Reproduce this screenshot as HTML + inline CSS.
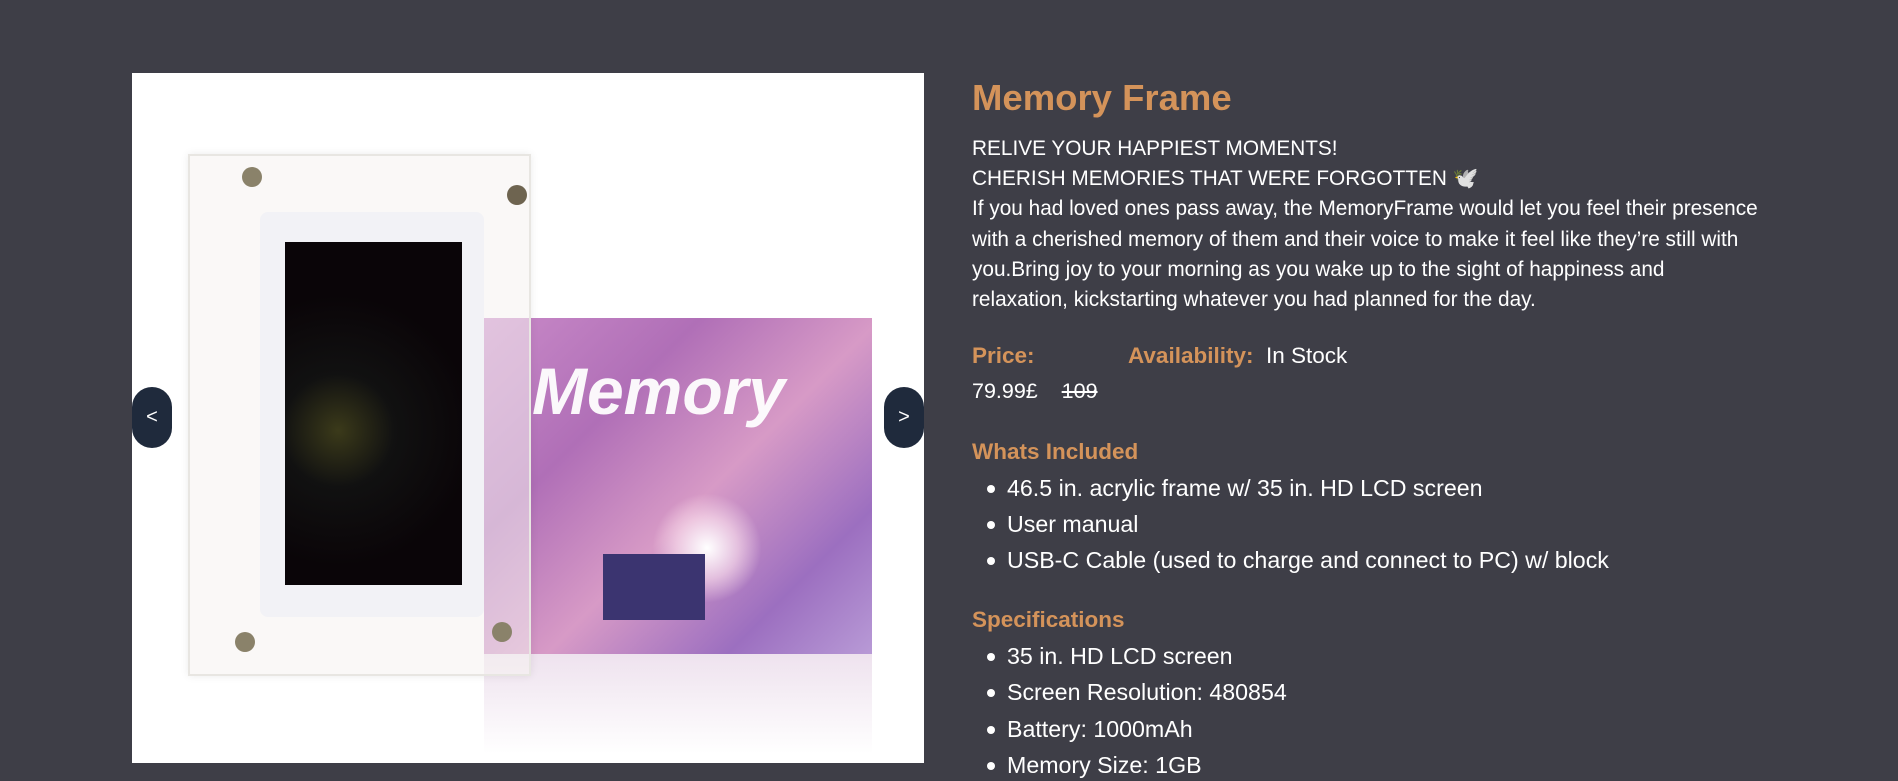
<!DOCTYPE html>
<html><head><meta charset="utf-8"><style>
body{margin:0;width:1898px;height:781px;background:#3e3e47;overflow:hidden;font-family:"Liberation Sans",sans-serif;position:relative}
.img{position:absolute;left:132px;top:73px;width:792px;height:690px;background:#fff;overflow:hidden}
.a{position:absolute}
.btn{position:absolute;top:387px;width:40px;height:61px;border-radius:20px;background:#1f2a3c;color:#fff;font-size:20px;line-height:61px;text-align:center}
.t{position:absolute;left:972px;color:#fff;font-size:20.8px;white-space:nowrap}
.o{color:#d4935a;font-weight:bold}
.li{position:absolute;left:1007px;color:#fff;font-size:23.2px;white-space:nowrap}
.li:before{content:"";position:absolute;left:-20px;top:10px;width:8px;height:8px;border-radius:50%;background:#fff}
</style></head><body>
<div class="img">
 <div class="a" style="left:352px;top:245px;width:388px;height:336px;background:linear-gradient(135deg,#c98ac8 0%,#b06fb7 30%,#d79ac6 55%,#9c6fc0 80%,#b89ad6 100%)"></div>
 <div class="a" style="left:520px;top:420px;width:110px;height:110px;border-radius:50%;background:radial-gradient(circle,#fff 0%,rgba(255,230,240,.6) 40%,rgba(255,255,255,0) 70%)"></div>
 <div class="a" style="left:400px;top:280px;color:#fff;font-size:66px;font-weight:bold;font-style:italic;opacity:.95">Memory</div>
 <div class="a" style="left:471px;top:481px;width:102px;height:66px;background:#3b3470"></div>
 <div class="a" style="left:352px;top:581px;width:388px;height:100px;background:linear-gradient(#eee2ee,#fff)"></div>
 <div class="a" style="left:56px;top:81px;width:339px;height:518px;background:rgba(245,243,240,.55);border:2px solid #e8e6e2;box-shadow:0 0 8px rgba(0,0,0,.08)"></div>
 <div class="a" style="left:128px;top:139px;width:224px;height:405px;background:#f2f2f6;border-radius:8px"></div>
 <div class="a" style="left:153px;top:169px;width:177px;height:343px;background:radial-gradient(circle at 30% 55%,#3b3a1a 0%,#111 25%,#0a0508 60%)"></div>
 <div class="a" style="left:110px;top:94px;width:20px;height:20px;border-radius:50%;background:#8a826a"></div>
 <div class="a" style="left:375px;top:112px;width:20px;height:20px;border-radius:50%;background:#6e6450"></div>
 <div class="a" style="left:103px;top:559px;width:20px;height:20px;border-radius:50%;background:#8a826a"></div>
 <div class="a" style="left:360px;top:549px;width:20px;height:20px;border-radius:50%;background:#8a826a"></div>
</div>
<div class="btn" style="left:132px">&lt;</div>
<div class="btn" style="left:884px">&gt;</div>

<div class="t o" style="top:77px;font-size:36.5px">Memory Frame</div>
<div class="t" style="top:134px;line-height:30.2px">RELIVE YOUR HAPPIEST MOMENTS!<br>CHERISH MEMORIES THAT WERE FORGOTTEN 🕊️<br>If you had loved ones pass away, the MemoryFrame would let you feel their presence<br>with a cherished memory of them and their voice to make it feel like they’re still with<br>you.Bring joy to your morning as you wake up to the sight of happiness and<br>relaxation, kickstarting whatever you had planned for the day.</div>
<div class="t o" style="top:343px;font-size:22.5px">Price:</div>
<div class="t" style="top:343px;left:1128px;font-size:22.5px"><span class="o">Availability:</span>&nbsp; In Stock</div>
<div class="t" style="top:379px;font-size:21.5px">79.99£ &nbsp;&nbsp; <s>109</s></div>
<div class="t o" style="top:439px;font-size:22.5px">Whats Included</div>
<div class="li" style="top:475px">46.5 in. acrylic frame w/ 35 in. HD LCD screen</div>
<div class="li" style="top:511px">User manual</div>
<div class="li" style="top:547px">USB-C Cable (used to charge and connect to PC) w/ block</div>
<div class="t o" style="top:607px;font-size:22.5px">Specifications</div>
<div class="li" style="top:643px">35 in. HD LCD screen</div>
<div class="li" style="top:679px">Screen Resolution: 480854</div>
<div class="li" style="top:716px">Battery: 1000mAh</div>
<div class="li" style="top:752px">Memory Size: 1GB</div>
</body></html>
